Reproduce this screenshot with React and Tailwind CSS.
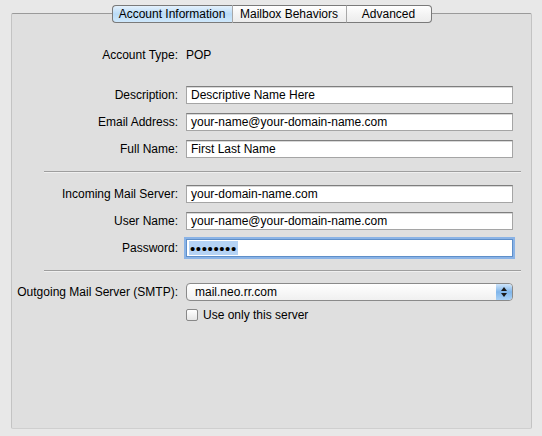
import React from "react";

const font = { fontFamily: '"Liberation Sans", Arial, sans-serif' };

function Tab({ label, selected, first, last, width }) {
  return (
    <div
      className={
        "h-[18px] flex items-center justify-center text-[12px] text-black border-y border-[#7a7a7a] " +
        (selected
          ? "bg-gradient-to-b from-[#e4f1fc] via-[#b9dbf7] to-[#cfe8fb] "
          : "bg-gradient-to-b from-[#ffffff] via-[#f4f4f4] to-[#ececec] ") +
        (first ? "border-l rounded-l-[4px] " : "") +
        (last ? "border-r rounded-r-[4px] " : "border-r border-r-[#a8a8a8] ")
      }
      style={{ width }}
    >
      {label}
    </div>
  );
}

function Field({ value }) {
  return (
    <div className="h-[18px] w-[327px] bg-white border border-[#a5a5a5] border-t-[#7e7e7e] shadow-[inset_0_1px_0_#d8d8d8] flex items-center pl-[4px] text-[12px] text-black">
      {value}
    </div>
  );
}

function Row({ label, children, className = "" }) {
  return (
    <div className={"flex items-center " + className}>
      <div className="w-[166px] text-right text-[12px] text-black">{label}</div>
      <div className="ml-[8px]">{children}</div>
    </div>
  );
}

export default function App() {
  return (
    <div className="w-[542px] h-[436px] bg-[#e8e8e8] flex flex-col pt-[5px]" style={font}>
      <div className="flex justify-center relative z-10 -mb-[10px] pl-[1px]">
        <Tab label="Account Information" selected first width={121} />
        <Tab label="Mailbox Behaviors" width={114} />
        <Tab label="Advanced" last width={85} />
      </div>
      <div className="ml-[11px] w-[521px] h-[416px] bg-[#dfdfdf] border border-[#c3c3c3] border-t-[#9a9a9a] border-b-[#cfcfcf] rounded-[2px] flex flex-col pt-[32px]">
        <Row label="Account Type:">
          <div className="h-[18px] flex items-center text-[12px] text-black">POP</div>
        </Row>

        <Row label="Description:" className="mt-[22px]">
          <Field value="Descriptive Name Here" />
        </Row>
        <Row label="Email Address:" className="mt-[9px]">
          <Field value="your-name@your-domain-name.com" />
        </Row>
        <Row label="Full Name:" className="mt-[9px]">
          <Field value="First Last Name" />
        </Row>

        <div className="mt-[13px] ml-[32px] mr-[10px] h-px bg-[#9e9e9e] border-b border-[#efefef] box-content" />

        <Row label="Incoming Mail Server:" className="mt-[12px]">
          <Field value="your-domain-name.com" />
        </Row>
        <Row label="User Name:" className="mt-[9px]">
          <Field value="your-name@your-domain-name.com" />
        </Row>
        <Row label="Password:" className="mt-[9px]">
          <div className="h-[18px] w-[327px] bg-white border border-[#5f8fc9] ring-2 ring-[#8ab3e6] flex items-center pl-[2px] text-black">
            <span className="bg-[#b5d3f5] h-[14px] flex items-center px-[1px] tracking-[0.6px] text-[15px] leading-none">
              ••••••••
            </span>
          </div>
        </Row>

        <div className="mt-[13px] ml-[32px] mr-[10px] h-px bg-[#9e9e9e] border-b border-[#efefef] box-content" />

        <Row label="Outgoing Mail Server (SMTP):" className="mt-[11px]">
          <div className="h-[18px] w-[327px] rounded-[4px] border border-[#8a8a8a] bg-gradient-to-b from-white to-[#f0f0f0] flex items-center text-[12px] text-black overflow-hidden">
            <span className="flex-1 pl-[8px]">mail.neo.rr.com</span>
            <span className="w-[16px] h-[16px] rounded-r-[3px] bg-gradient-to-b from-[#cfe5fa] via-[#7fb5ea] to-[#a8d0f5] flex flex-col items-center justify-center gap-[2px]">
              <svg width="6" height="4" viewBox="0 0 6 4"><path d="M3 0 L6 4 L0 4 Z" fill="#1a1a1a" /></svg>
              <svg width="6" height="4" viewBox="0 0 6 4"><path d="M0 0 L6 0 L3 4 Z" fill="#1a1a1a" /></svg>
            </span>
          </div>
        </Row>
        <div className="flex items-center mt-[5px] ml-[174px]">
          <span className="w-[12px] h-[12px] rounded-[2px] border border-[#888] bg-gradient-to-b from-white to-[#e6e6e6]" />
          <span className="ml-[5px] text-[12px] text-black">Use only this server</span>
        </div>
      </div>
    </div>
  );
}
